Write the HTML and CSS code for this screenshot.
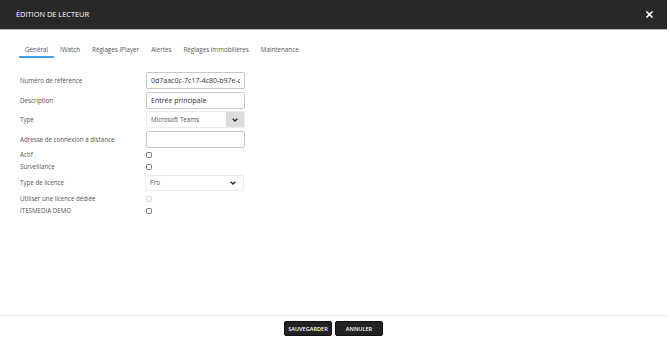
FILE: index.html
```html
<!DOCTYPE html>
<html lang="fr">
<head>
  <meta charset="UTF-8" />
  <title>Édition de lecteur</title>
  <link rel="stylesheet" href="styles.css">
</head>
<body>

  <div class="modal">
    <div class="modal-header">
      <h1 class="modal-title">ÉDITION DE LECTEUR</h1>
      <button class="close-btn" aria-label="Fermer">
        <svg width="7" height="7" viewBox="0 0 7 7">
          <path d="M1 1 L6 6 M6 1 L1 6" stroke="#fff" stroke-width="1.6" stroke-linecap="square" />
        </svg>
      </button>
    </div>

    <div class="modal-body">
      <ul class="tabs">
        <li class="tab active">Général</li>
        <li class="tab">IWatch</li>
        <li class="tab">Réglages IPlayer</li>
        <li class="tab">Alertes</li>
        <li class="tab">Réglages immobilières</li>
        <li class="tab">Maintenance</li>
      </ul>

      <form class="form">
        <div class="field">
          <label>Numéro de référence</label>
          <input class="text-input" type="text" value="0d7aac0c-7c17-4c80-b97e-c8a1f2e3d4b5">
        </div>
        <div class="field">
          <label>Description</label>
          <input class="text-input" type="text" value="Entrée principale">
        </div>
        <div class="field">
          <label>Type</label>
          <div class="select select-addon">
            <span class="select-value">Microsoft Teams</span>
            <span class="select-btn">
              <svg width="6" height="4" viewBox="0 0 6 4"><path d="M0.7 0.7 L3 3 L5.3 0.7" fill="none" stroke="#222" stroke-width="1.3" /></svg>
            </span>
          </div>
        </div>
        <div class="field last-input">
          <label>Adresse de connexion à distance</label>
          <input class="text-input" type="text" value="">
        </div>
        <div class="field check">
          <label>Actif</label>
          <input class="checkbox" type="checkbox">
        </div>
        <div class="field check">
          <label>Surveillance</label>
          <input class="checkbox" type="checkbox">
        </div>
        <div class="field licence">
          <label>Type de licence</label>
          <div class="select select-plain">
            <span class="select-value">Pro</span>
            <svg class="chevron" width="6" height="4" viewBox="0 0 6 4"><path d="M0.7 0.7 L3 3 L5.3 0.7" fill="none" stroke="#222" stroke-width="1.3" /></svg>
          </div>
        </div>
        <div class="field check">
          <label>Utiliser une licence dédiée</label>
          <input class="checkbox" type="checkbox" disabled>
        </div>
        <div class="field check">
          <label>ITESMEDIA DEMO</label>
          <input class="checkbox" type="checkbox">
        </div>
      </form>
    </div>

    <div class="modal-footer">
      <button class="btn">SAUVEGARDER</button>
      <button class="btn">ANNULER</button>
    </div>
  </div>

</body>
</html>
```

FILE: styles.css
```css
* {
  box-sizing: border-box;
}

body {
  margin: 0;
  padding: 0;
  height: 100vh;
  background: #fff;
  font-family: 'Open Sans', 'Liberation Sans', sans-serif;
  overflow: hidden;
}

.modal {
  width: 667px;
  height: 344px;
  display: flex;
  flex-direction: column;
  background: #fff;
}

.modal-header {
  height: 30px;
  flex: none;
  background: #282828;
  border-bottom: 1px solid #b5b5b5;
  display: flex;
  align-items: center;
  justify-content: space-between;
  padding: 0 14px 1px 16px;
}

.modal-title {
  margin: 0;
  color: #fff;
  font-size: 7.4px;
  font-weight: 400;
}

.close-btn {
  background: none;
  border: none;
  padding: 0;
  width: 7px;
  height: 7px;
  display: flex;
  cursor: pointer;
}

.modal-body {
  flex: 1;
}

.tabs {
  list-style: none;
  margin: 11px 0 0;
  padding: 0 0 0 19px;
  display: flex;
}

.tab {
  padding: 4px 6px 2px;
  line-height: 9px;
  font-size: 6.25px;
  color: #555;
  border-bottom: 2px solid transparent;
  cursor: pointer;
}

.tab.active {
  border-bottom-color: #3aa3ec;
}

.form {
  margin-top: 14px;
  padding-left: 20px;
}

.field {
  display: flex;
  align-items: center;
  min-height: 17px;
  margin-bottom: 2.5px;
}

.field label {
  width: 126px;
  flex: none;
  font-size: 6.2px;
  color: #555;
}

.field.last-input {
  margin-bottom: 1px;
}

.field.check {
  min-height: 12px;
  margin-bottom: 0;
}

.field.licence {
  min-height: 20px;
  margin-bottom: 0;
}

.text-input {
  width: 99px;
  height: 17px;
  margin: 0;
  padding: 0 4px;
  border: 1px solid #c8c8c8;
  border-radius: 2px;
  font-family: inherit;
  font-size: 7px;
  color: #333;
  outline: none;
}

.select {
  height: 17px;
  display: flex;
  align-items: center;
  border: 1px solid #ececec;
  border-radius: 2px;
  background: #fff;
}

.select-value {
  flex: 1;
  padding-left: 4px;
  font-size: 6.2px;
  color: #555;
}

.select-addon {
  width: 99px;
}

.select-btn {
  width: 18px;
  align-self: stretch;
  background: #dcdcdc;
  display: flex;
  align-items: center;
  justify-content: center;
}

.select-plain {
  width: 99px;
  height: 16px;
  margin-left: -1px;
  padding-right: 7px;
}

.checkbox {
  appearance: none;
  width: 6px;
  height: 6px;
  margin: 0;
  border: 1px solid #777;
  border-radius: 1.5px;
  background: #fff;
}

.checkbox:disabled {
  border-color: #d8d8d8;
  background: #f7f7f7;
}

.modal-footer {
  height: 29px;
  flex: none;
  border-top: 1px solid #ebebeb;
  display: flex;
  justify-content: center;
  align-items: flex-start;
  gap: 3px;
  padding-top: 5px;
}

.btn {
  width: 48px;
  height: 15px;
  padding: 0;
  background: #222;
  color: #fff;
  border: 1px solid #111;
  border-radius: 2px;
  font-family: inherit;
  font-size: 5.6px;
  font-weight: 600;
  cursor: pointer;
}
```
